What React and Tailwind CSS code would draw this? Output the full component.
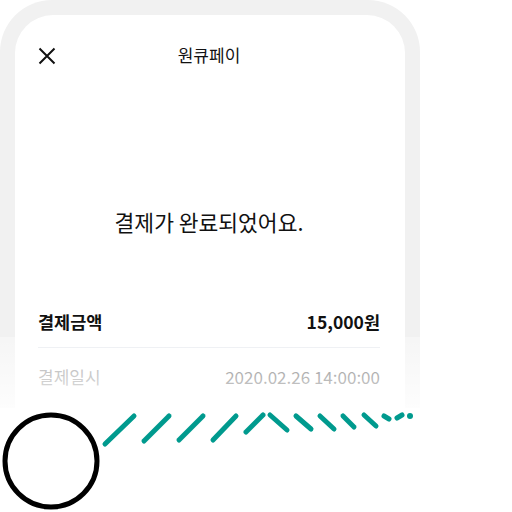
import React from 'react';

const slashes = [
  [105, 444, 134, 416],
  [144, 441, 169, 416],
  [179, 440, 203, 416],
  [213, 440, 236, 416],
  [246, 432, 263, 415],
  [270, 415, 287, 430],
  [296, 416, 311, 429],
  [320, 416, 334, 429],
  [343, 416, 354, 427],
  [364, 415, 376, 426],
  [384, 416, 389, 419],
  [397, 418, 402, 415],
];

export default function App() {
  return (
    <div className="w-[512px] h-[512px] bg-white overflow-hidden" style={{ fontFamily: '"Noto Sans CJK KR", "Noto Sans", sans-serif' }}>
      {/* phone frame */}
      <div className="relative w-[420px] h-[408px] overflow-hidden rounded-t-[52px] bg-[#f1f1f1] pt-[15px] px-[15px]">
        <div className="h-full bg-white rounded-t-[38px] pl-[23px] pr-[25px]">
          <div className="relative h-[80px] flex items-center justify-center">
            <svg className="absolute left-0 top-[32px]" width="18" height="18" viewBox="0 0 18 18">
              <path d="M1.5 1.5 L16.5 16.5 M16.5 1.5 L1.5 16.5" stroke="#111" strokeWidth="2" fill="none" />
            </svg>
            <span className="text-[17px] text-[#111]">원큐페이</span>
          </div>

          <p className="mt-[112px] text-center text-[21.5px] leading-[30px] text-[#111]">결제가 완료되었어요.</p>

          <div className="mt-[72px] flex items-center justify-between h-[26px] text-[17.5px] font-bold text-[#111]">
            <span>결제금액</span>
            <span>15,000원</span>
          </div>
          <div className="mt-[12px] h-px bg-[#e4e6ec]" />
          <div className="mt-[16px] flex items-center justify-between h-[26px] text-[17px] text-[#3a3a3a]">
            <span className="text-[#777]">결제일시</span>
            <span>2020.02.26 14:00:00</span>
          </div>
        </div>
        <div className="absolute left-0 right-0 top-[337px] bottom-0 bg-gradient-to-b from-white/35 to-white/85" />
      </div>

      {/* illustration */}
      <svg width="512" height="104" viewBox="0 408 512 104" className="block">
        <circle cx="51" cy="461" r="46" fill="none" stroke="#000" strokeWidth="5" />
        {slashes.map(([x1, y1, x2, y2], i) => (
          <line key={i} x1={x1} y1={y1} x2={x2} y2={y2} stroke="#009a8e" strokeWidth="5" strokeLinecap="round" />
        ))}
        <circle cx="410" cy="416" r="3" fill="#009a8e" />
      </svg>
    </div>
  );
}
